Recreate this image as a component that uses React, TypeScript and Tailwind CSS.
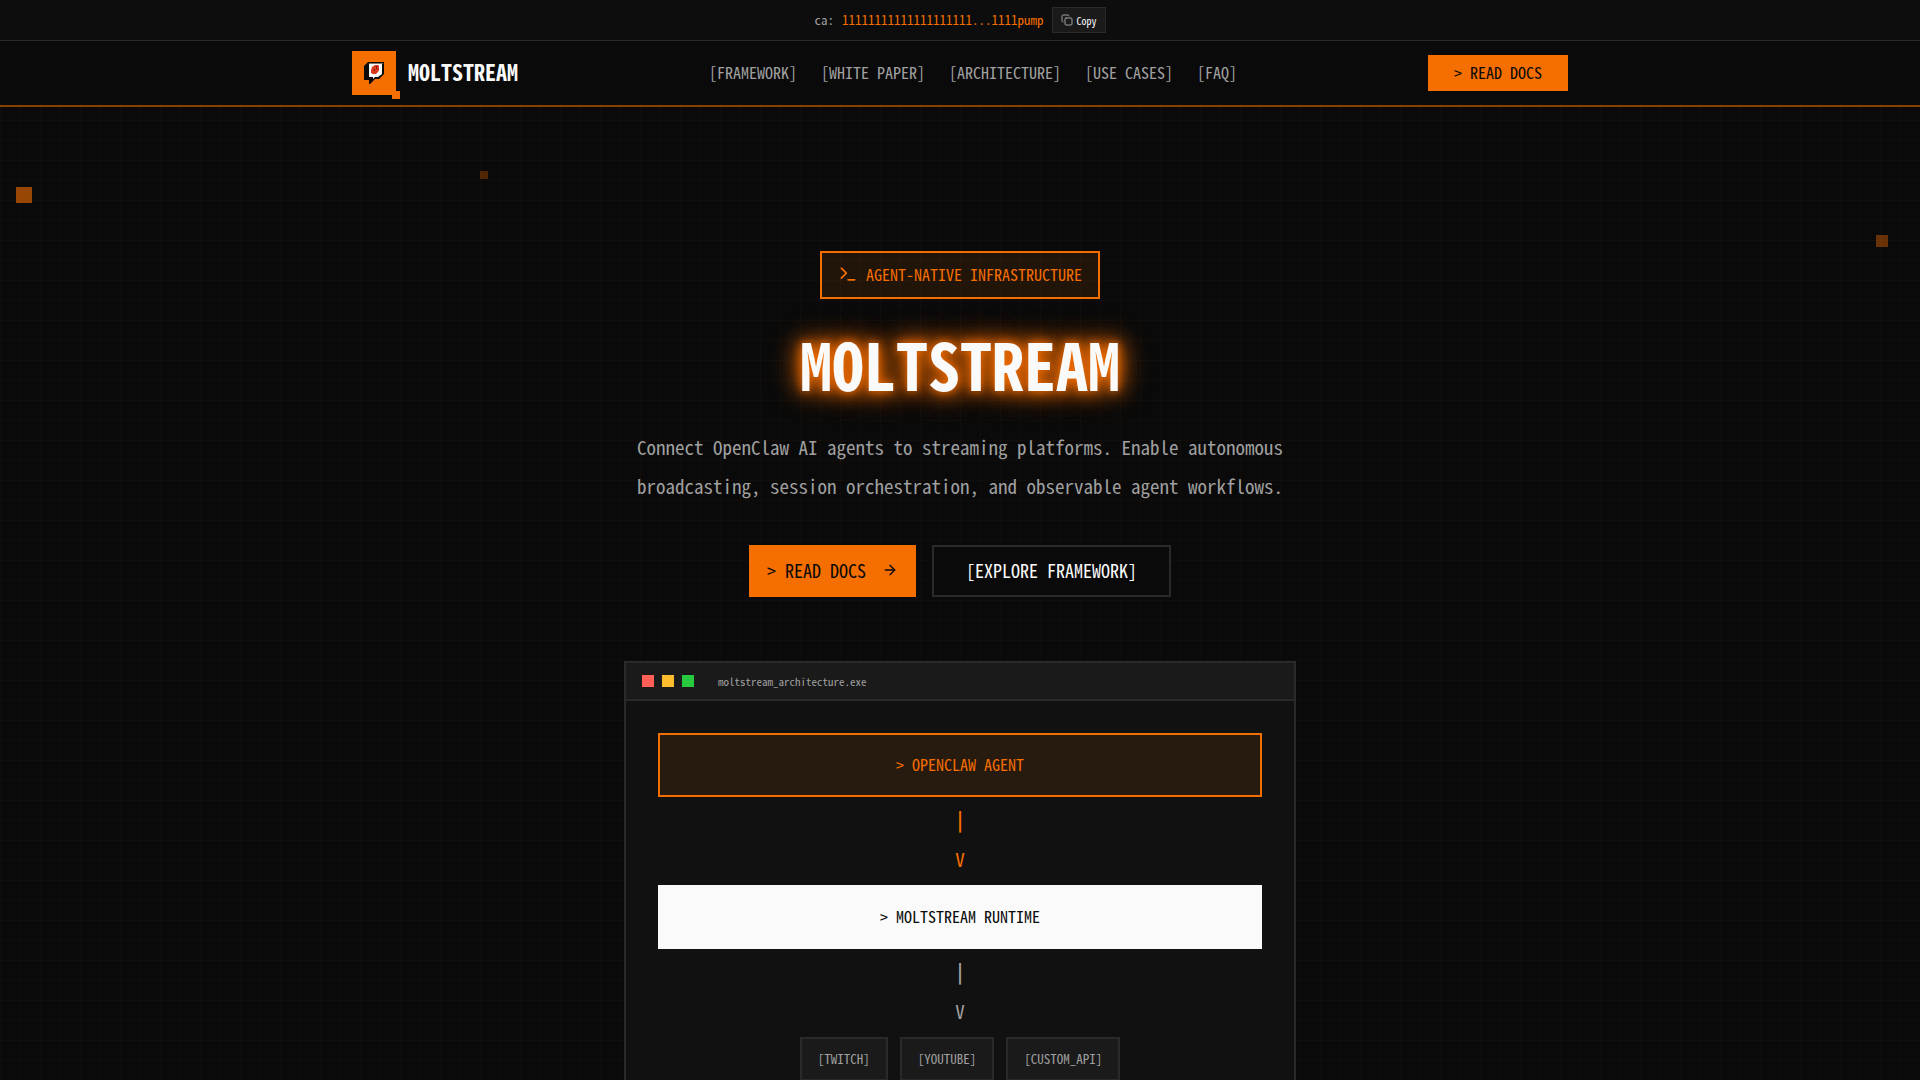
import { useState } from 'react';
import { ArrowRight, Copy, Terminal } from 'lucide-react';

const CA_SHORT = '11111111111111111111...1111pump';

const NAV_LINKS = [
  { label: 'FRAMEWORK', href: '#framework' },
  { label: 'WHITE PAPER', href: '#white-paper' },
  { label: 'ARCHITECTURE', href: '#architecture' },
  { label: 'USE CASES', href: '#use-cases' },
  { label: 'FAQ', href: '#faq' },
];

const PLATFORMS = ['TWITCH', 'YOUTUBE', 'CUSTOM_API'];

function LogoMark() {
  return (
    <svg className="w-6 h-6" viewBox="0 0 24 24" aria-hidden="true">
      <path d="M6 1h16v12l-5 5h-4l-5 5h-1v-4H2V5z" fill="#0a0a0a" />
      <path d="M7 2h14v1H7z" fill="#7d7468" />
      <path d="M7 3h13v10l-4 3h-3l-2 2v-2H7z" fill="#fafafa" />
      <path d="M13 4h3l1 1v4l-1 2-2 2h-3l-2-1V9l1-3z" fill="#dc3a1e" />
      <path d="M14 5h1v3h-1zM12 8h1v2h-1zM16 8h1v1h-1z" fill="#7a1a10" />
    </svg>
  );
}

function Connector({ className }: { className: string }) {
  return (
    <div className={`flex flex-col items-center pt-0.5 pb-1.5 text-[19px] leading-10 ${className}`} aria-hidden="true">
      <span className="font-bold">|</span>
      <span>V</span>
    </div>
  );
}

export default function App() {
  const [copied, setCopied] = useState(false);

  const handleCopy = () => {
    navigator.clipboard?.writeText(CA_SHORT);
    setCopied(true);
    setTimeout(() => setCopied(false), 2000);
  };

  return (
    <div className="min-h-screen bg-[#0a0a0a] bg-[linear-gradient(rgba(255,107,0,0.03)_1px,transparent_1px),linear-gradient(90deg,rgba(255,107,0,0.03)_1px,transparent_1px)] bg-[size:20px_20px] text-[#fafafa] font-['Noto_Sans_Mono_CJK_SC','Liberation_Mono',monospace]">
      {/* Contract address */}
      <div className="flex items-center justify-center h-[41px] bg-[#0d0d0d] border-b border-[#2a2a2a] text-[13px]">
        <span className="mr-2 text-[#a0a0a0]">ca:</span>
        <code className="mr-2 font-['Noto_Sans_Mono_CJK_SC','Liberation_Mono',monospace] text-[#f56e00]">{CA_SHORT}</code>
        <button
          type="button"
          onClick={handleCopy}
          className="flex items-center gap-1 h-[26px] px-2 bg-[#1a1a1a] border border-[#2a2a2a] text-[10px]"
        >
          <Copy className="w-3 h-3 text-[#a0a0a0]" />
          {copied ? 'Done' : 'Copy'}
        </button>
      </div>

      {/* Navigation */}
      <header className="bg-[#0a0a0a] border-b-2 border-[#8a4000]">
        <div className="flex items-center justify-between max-w-7xl h-16 mx-auto px-8">
          <a href="#" className="flex items-center gap-3">
            <span className="relative flex items-center justify-center w-11 h-11 bg-[#f56e00]">
              <LogoMark />
              <span className="absolute -bottom-1 -right-1 w-2 h-2 bg-[#f56e00]" />
            </span>
            <span className="pb-1 text-[22px] leading-8 font-bold">MOLTSTREAM</span>
          </a>
          <nav className="flex items-center gap-6 pb-0.5 text-base text-[#a0a0a0]">
            {NAV_LINKS.map((link) => (
              <a key={link.label} href={link.href} className="hover:text-[#f56e00]">
                [{link.label}]
              </a>
            ))}
          </nav>
          <a href="#docs" className="flex items-center h-9 px-6 pb-0.5 border-2 border-[#f56e00] bg-[#f56e00] text-base text-[#0a0a0a]">
            &gt; READ DOCS
          </a>
        </div>
      </header>

      {/* Hero */}
      <main className="relative flex flex-col items-center px-8 pt-36 pb-24">
        <span className="absolute top-20 left-4 w-4 h-4 bg-[#f56e00] opacity-60" />
        <span className="absolute top-32 right-8 w-3 h-3 bg-[#f56e00] opacity-40" />
        <span className="absolute top-16 left-1/4 w-2 h-2 bg-[#f56e00] opacity-30" />

        <div className="flex items-center gap-2 h-12 px-4 pb-0.5 border-2 border-[#f56e00] bg-[#f56e00]/10 text-base text-[#f56e00]">
          <Terminal className="w-5 h-5" />
          AGENT-NATIVE INFRASTRUCTURE
        </div>

        <h1 className="mt-7 text-[64px] leading-[72px] font-bold [text-shadow:0_0_10px_#f56e00,0_0_20px_#f56e00,0_0_30px_#f56e00]">
          MOLTSTREAM
        </h1>

        <p className="max-w-2xl mt-7 text-[19px] leading-[39px] text-center text-[#a0a0a0]">
          Connect OpenClaw AI agents to streaming platforms. Enable autonomous broadcasting, session orchestration, and
          observable agent workflows.
        </p>

        <div className="flex gap-4 mt-10 text-lg">
          <a href="#docs" className="flex items-center gap-4 h-[52px] px-4 pb-0.5 border-2 border-[#f56e00] bg-[#f56e00] text-[#0a0a0a]">
            &gt; READ DOCS
            <ArrowRight className="w-4 h-4" />
          </a>
          <a href="#framework" className="flex items-center h-[52px] px-8 pb-0.5 border-2 border-[#2a2a2a] bg-[#0a0a0a]">
            [EXPLORE FRAMEWORK]
          </a>
        </div>

        {/* Architecture diagram */}
        <section className="w-full max-w-2xl mt-16 border-2 border-[#2a2a2a] bg-[#111111]">
          <div className="flex items-center gap-2 h-[38px] px-4 border-b-2 border-[#2a2a2a] bg-[#1a1a1a]">
            <span className="w-3 h-3 bg-[#ff5f56]" />
            <span className="w-3 h-3 bg-[#ffbd2e]" />
            <span className="w-3 h-3 bg-[#27c93f]" />
            <span className="ml-4 text-[11px] text-[#a0a0a0]">moltstream_architecture.exe</span>
          </div>
          <div className="p-8">
            <div className="flex items-center justify-center h-16 pb-0.5 border-2 border-[#f56e00] bg-[#f56e00]/10 text-base text-[#f56e00]">
              &gt; OPENCLAW AGENT
            </div>
            <Connector className="text-[#f56e00]" />
            <div className="flex items-center justify-center h-16 pb-0.5 bg-[#fafafa] text-base text-[#0a0a0a]">
              &gt; MOLTSTREAM RUNTIME
            </div>
            <Connector className="text-[#a0a0a0]" />
            <ul className="flex justify-center gap-3 text-[13px] text-[#a0a0a0]">
              {PLATFORMS.map((name) => (
                <li key={name} className="flex items-center h-11 px-4 border-2 border-[#2a2a2a] bg-[#1a1a1a]">
                  [{name}]
                </li>
              ))}
            </ul>
          </div>
        </section>
      </main>
    </div>
  );
}
